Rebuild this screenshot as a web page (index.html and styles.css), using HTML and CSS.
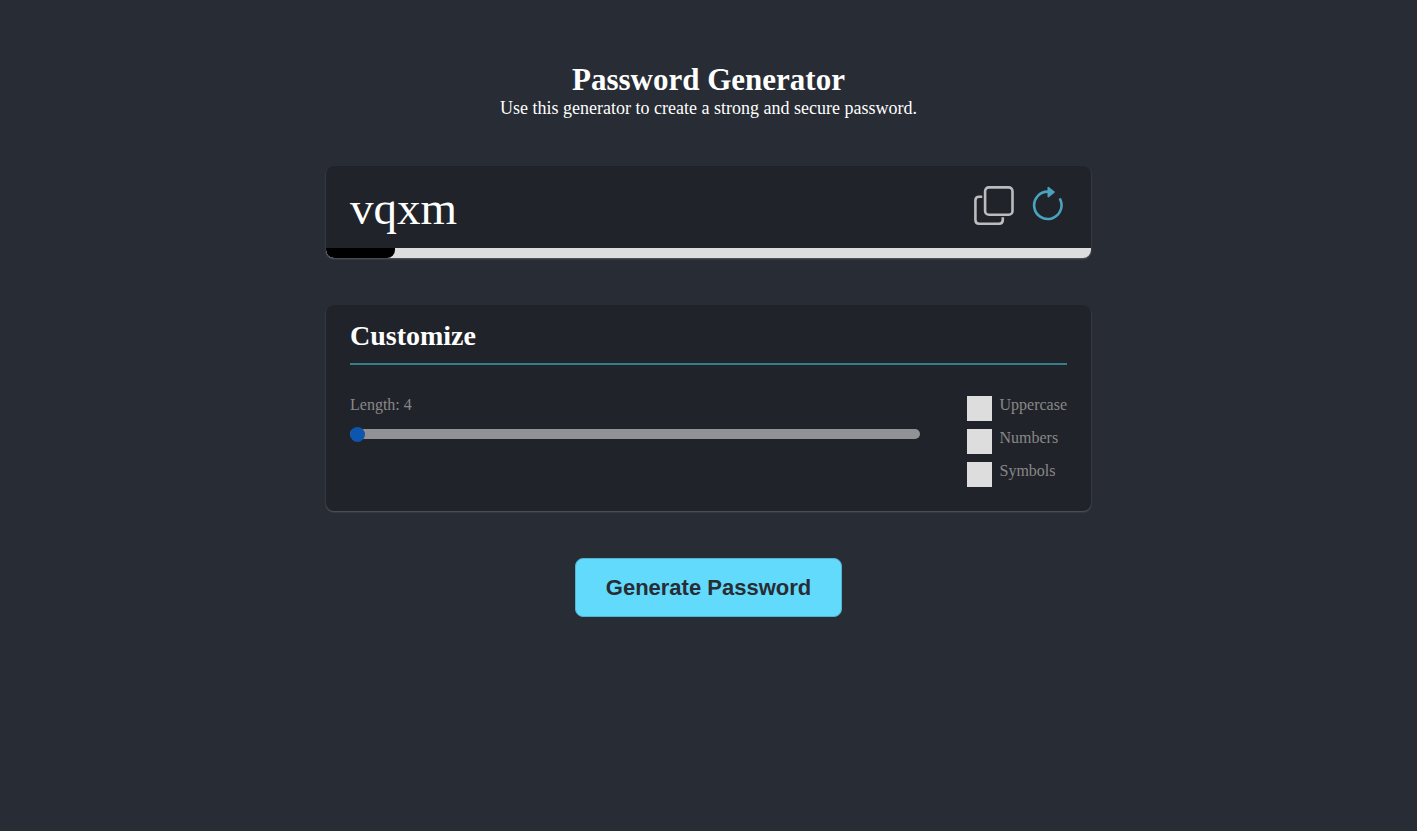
FILE: index.html
```html
<!DOCTYPE html>
<html lang="en">
<head>
<meta charset="utf-8">
<meta name="viewport" content="width=device-width, initial-scale=1">
<title>Password Generator</title>
<link rel="stylesheet" href="styles.css">
</head>
<body>
<main class="app">
  <header class="intro">
    <h1 class="title">Password Generator</h1>
    <p class="subtitle">Use this generator to create a strong and secure password.</p>
  </header>

  <section class="card result" aria-label="Generated password">
    <div class="result-row">
      <output class="password">vqxm</output>
      <div class="actions">
        <button class="icon-button" type="button" aria-label="Copy password">
          <svg width="40" height="40" viewBox="0 0 40 40" fill="none" stroke="#bcbcbe" stroke-width="2.6" stroke-linecap="butt">
            <rect x="11.1" y="1.4" width="27.4" height="27.4" rx="3.8"/>
            <path d="M8.2 10.8H5.1Q1.4 10.8 1.4 14.5V34Q1.4 37.7 5.1 37.7H25.1Q28.8 37.7 28.8 34V31.3"/>
          </svg>
        </button>
        <button class="icon-button" type="button" aria-label="New password">
          <svg width="32" height="40" viewBox="0 0 32 40" fill="none" stroke="#4aa3be" stroke-width="2.6" stroke-linecap="round">
            <path d="M16 5.6A13.7 13.7 0 1 0 28.2 13.4"/>
            <path d="M16.3 1.6V10.6L22 6.1Z" fill="#4aa3be" stroke-width="1.6" stroke-linejoin="round"/>
          </svg>
        </button>
      </div>
    </div>
    <div class="meter"><div class="meter-fill" style="width: 9%"></div></div>
  </section>

  <section class="card customize">
    <h2 class="heading">Customize</h2>
    <div class="options">
      <div class="length">
        <label class="label" for="length">Length: 4</label>
        <input class="slider" id="length" type="range" min="4" max="32" value="4">
      </div>
      <div class="checks">
        <label class="check label"><input class="box" type="checkbox"><span>Uppercase</span></label>
        <label class="check label"><input class="box" type="checkbox"><span>Numbers</span></label>
        <label class="check label"><input class="box" type="checkbox"><span>Symbols</span></label>
      </div>
    </div>
  </section>

  <button class="generate" type="button">Generate Password</button>
</main>
</body>
</html>
```
FILE: styles.css
```css
* {
  box-sizing: border-box;
  margin: 0;
}

body {
  min-height: 100vh;
  background: #282c34;
  color: #fff;
  font-family: "Liberation Serif", "Times New Roman", serif;
}

.app {
  display: flex;
  flex-direction: column;
  align-items: center;
  gap: 47px;
  width: 100%;
  max-width: 797px;
  margin: 0 auto;
  padding: 61px 16px 48px;
}

.intro {
  text-align: center;
}

.title {
  font-size: 31px;
  line-height: 37px;
}

.subtitle {
  font-size: 18px;
  line-height: 21px;
}

.card {
  width: 100%;
  border-radius: 8px;
  background: #21232a;
  box-shadow: 0 1px 2px #555b66;
}

.result {
  overflow: hidden;
}

.result-row {
  display: flex;
  align-items: center;
  justify-content: space-between;
  padding: 14px 24px 12px;
}

.password {
  font-size: 47px;
  line-height: 56px;
}

.actions {
  display: flex;
  align-items: center;
  gap: 18px;
  padding: 0 3px 4px 0;
}

.icon-button {
  padding: 0;
  border: 0;
  background: none;
  cursor: pointer;
}

.icon-button svg {
  display: block;
}

.meter {
  height: 10px;
  background: #ddd;
}

.meter-fill {
  height: 100%;
  border-radius: 0 0 8px 8px;
  background: #000;
}

.customize {
  padding: 14px 24px 24px;
}

.heading {
  padding-bottom: 10px;
  border-bottom: 2px solid #357f8d;
  font-size: 28px;
  line-height: 34px;
}

.options {
  display: flex;
  gap: 47px;
  padding-top: 31px;
}

.length {
  display: flex;
  flex: 1;
  flex-direction: column;
  gap: 15px;
}

.label {
  color: #888;
  font-size: 16px;
  line-height: 18px;
}

.slider {
  width: 100%;
  height: 10px;
  border-radius: 5px;
  background: #919295;
  appearance: none;
}

.slider::-webkit-slider-thumb {
  width: 15px;
  height: 15px;
  border-radius: 50%;
  background: #0d56ae;
  appearance: none;
}

.checks {
  display: flex;
  flex-direction: column;
  gap: 8px;
}

.check {
  display: flex;
  gap: 7px;
}

.box {
  width: 25px;
  height: 25px;
  background: #ddd;
  appearance: none;
}

.generate {
  padding: 16px 30px;
  border: 1px solid #51b5d0;
  border-radius: 8px;
  background: #61dafb;
  color: #282c34;
  font: bold 22px/25px "Liberation Sans", Arial, sans-serif;
  cursor: pointer;
}
```
